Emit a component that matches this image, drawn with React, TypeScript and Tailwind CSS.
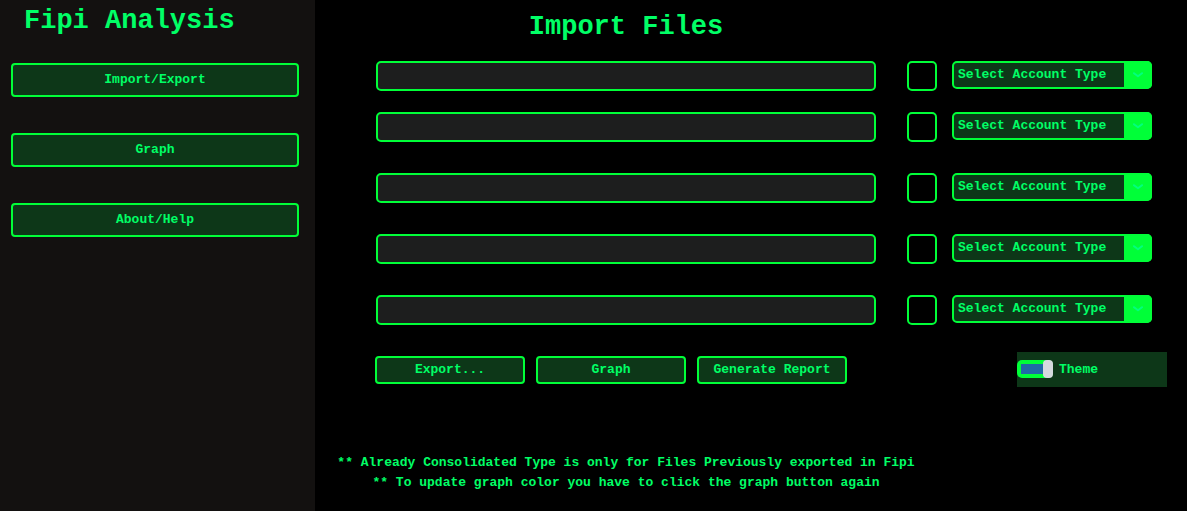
import { useState } from "react";

const NAV_ITEMS = ["Import/Export", "Graph", "About/Help"];
const ACTIONS = ["Export...", "Graph", "Generate Report"];
const ACCOUNT_TYPES = ["Select Account Type", "Checking", "Savings", "Credit Card", "Already Consolidated"];
const FILE_ROWS = [1, 2, 3, 4, 5];

const BUTTON = "rounded border-2 border-[#00ff38] bg-[#0d3718] text-center hover:bg-[#14502a]";

function FileRow({ index }: { index: number }) {
  return (
    <div className="flex h-[30px] items-start">
      <input
        type="text"
        aria-label={`File ${index} path`}
        className="h-[30px] min-w-0 flex-1 rounded-[5px] border-2 border-[#00ff38] bg-[#1d1e1e] px-2 outline-none"
      />
      <input
        type="checkbox"
        aria-label={`Use file ${index}`}
        className="ml-[31px] size-[30px] shrink-0 appearance-none rounded-[5px] border-2 border-[#00ff38] bg-black checked:bg-[#00ff38]"
      />
      <div className="relative ml-[15px] h-7 w-[200px] shrink-0">
        <select
          aria-label={`Account type for file ${index}`}
          className="h-7 w-full appearance-none rounded-[5px] border-2 border-[#00ff38] bg-[#0d3718] pr-7 pl-1 outline-none"
        >
          {ACCOUNT_TYPES.map((type) => (
            <option key={type}>{type}</option>
          ))}
        </select>
        <span className="pointer-events-none absolute inset-y-0 right-0 flex w-7 items-center justify-center rounded-r-[5px] bg-[#00ff38]">
          <svg width="10" height="6" viewBox="0 0 10 6" fill="none" stroke="#00ff80" strokeWidth="2" strokeLinecap="round" strokeLinejoin="round">
            <path d="M1 1.2 5 4.2 9 1.2" />
          </svg>
        </span>
      </div>
    </div>
  );
}

export default function App() {
  const [on, setOn] = useState(true);

  return (
    <div className="flex min-h-screen bg-black font-['Liberation_Mono',monospace] text-[13px] leading-5 font-bold text-[#00ff66]">
      <aside className="w-[315px] shrink-0 bg-[#131110] pr-4 pl-[11px]">
        <h1 className="pt-[5px] pl-[13px] text-[27px] leading-8 whitespace-nowrap">Fipi Analysis</h1>
        <nav className="mt-[26px] flex flex-col gap-9">
          {NAV_ITEMS.map((item) => (
            <button key={item} type="button" className={`${BUTTON} h-[34px] w-full`}>
              {item}
            </button>
          ))}
        </nav>
      </aside>

      <main className="min-w-0 flex-1">
        <h2 className="pt-[11px] pr-[311px] pl-[61px] text-center text-[27px] leading-8 whitespace-nowrap">
          Import Files
        </h2>

        <div className="mt-[18px] flex flex-col gap-[31px] pr-[35px] pl-[61px]">
          <div className="flex flex-col gap-[21px]">
            <FileRow index={1} />
            <FileRow index={2} />
          </div>
          {FILE_ROWS.slice(2).map((row) => (
            <FileRow key={row} index={row} />
          ))}
        </div>

        <div className="mt-[27px] flex items-start justify-between pr-5 pl-[60px]">
          <div className="flex gap-[11px] pt-1">
            {ACTIONS.map((action) => (
              <button key={action} type="button" className={`${BUTTON} h-7 w-[150px]`}>
                {action}
              </button>
            ))}
          </div>
          <label className="flex h-[35px] w-[150px] items-start bg-[#0d3718] pt-2">
            <input
              type="checkbox"
              role="switch"
              checked={on}
              onChange={(event) => setOn(event.target.checked)}
              className="peer sr-only"
            />
            <span className={`flex h-[18px] w-9 rounded-[5px] bg-[#00ff38] ${on ? "justify-end" : "justify-start"}`}>
              <span className={`my-1 h-[10px] flex-1 ${on ? "ml-1 bg-[#1f6aa5]" : "order-2 mr-1 bg-[#0d3718]"}`} />
              <span className="h-[18px] w-[10px] rounded bg-[#d5d9de]" />
            </span>
            <span className="pl-[6px]">Theme</span>
          </label>
        </div>

        <div className="mt-[66px] pr-[265px] pl-[15px] text-center whitespace-nowrap">
          <p>** Already Consolidated Type is only for Files Previously exported in Fipi</p>
          <p>** To update graph color you have to click the graph button again</p>
        </div>
      </main>
    </div>
  );
}
